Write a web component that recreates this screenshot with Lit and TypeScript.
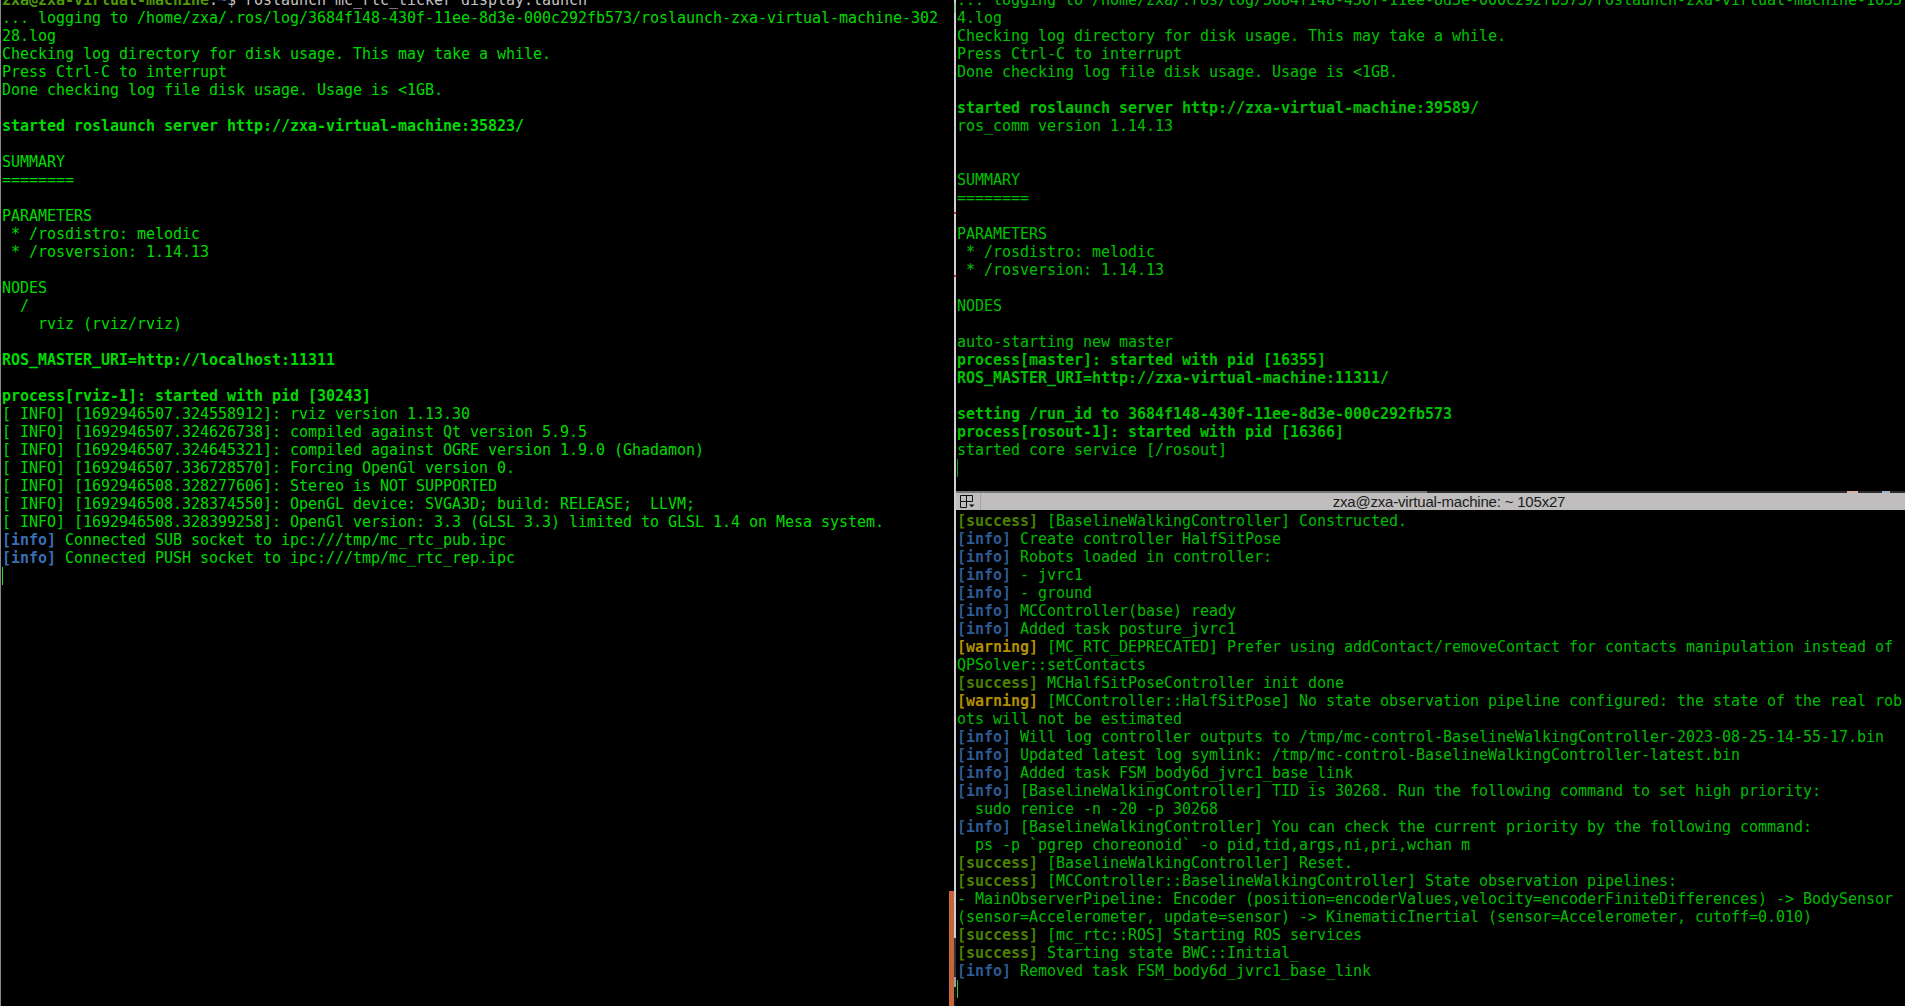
import { LitElement, html, css } from "lit";
import { customElement } from "lit/decorators.js";

type Seg = string | { t: string; c: string };
const I = { t: "[info]", c: "info" };
const S = { t: "[success]", c: "succ" };
const W = { t: "[warning]", c: "warn" };
const B = (t: string) => ({ t, c: "bold" });

const left: Seg[][] = [
  [{ t: "zxa@zxa-virtual-machine", c: "prompt" }, { t: ":", c: "plain" }, { t: "~", c: "info" }, { t: "$ roslaunch mc_rtc_ticker display.launch", c: "plain" }],
  ["... logging to /home/zxa/.ros/log/3684f148-430f-11ee-8d3e-000c292fb573/roslaunch-zxa-virtual-machine-302"],
  ["28.log"],
  ["Checking log directory for disk usage. This may take a while."],
  ["Press Ctrl-C to interrupt"],
  ["Done checking log file disk usage. Usage is <1GB."],
  [],
  [B("started roslaunch server http://zxa-virtual-machine:35823/")],
  [],
  ["SUMMARY"],
  ["========"],
  [],
  ["PARAMETERS"],
  [" * /rosdistro: melodic"],
  [" * /rosversion: 1.14.13"],
  [],
  ["NODES"],
  ["  /"],
  ["    rviz (rviz/rviz)"],
  [],
  [B("ROS_MASTER_URI=http://localhost:11311")],
  [],
  [B("process[rviz-1]: started with pid [30243]")],
  ["[ INFO] [1692946507.324558912]: rviz version 1.13.30"],
  ["[ INFO] [1692946507.324626738]: compiled against Qt version 5.9.5"],
  ["[ INFO] [1692946507.324645321]: compiled against OGRE version 1.9.0 (Ghadamon)"],
  ["[ INFO] [1692946507.336728570]: Forcing OpenGl version 0."],
  ["[ INFO] [1692946508.328277606]: Stereo is NOT SUPPORTED"],
  ["[ INFO] [1692946508.328374550]: OpenGL device: SVGA3D; build: RELEASE;  LLVM;"],
  ["[ INFO] [1692946508.328399258]: OpenGl version: 3.3 (GLSL 3.3) limited to GLSL 1.4 on Mesa system."],
  [I, " Connected SUB socket to ipc:///tmp/mc_rtc_pub.ipc"],
  [I, " Connected PUSH socket to ipc:///tmp/mc_rtc_rep.ipc"],
];

const topRight: Seg[][] = [
  ["... logging to /home/zxa/.ros/log/3684f148-430f-11ee-8d3e-000c292fb573/roslaunch-zxa-virtual-machine-1635"],
  ["4.log"],
  ["Checking log directory for disk usage. This may take a while."],
  ["Press Ctrl-C to interrupt"],
  ["Done checking log file disk usage. Usage is <1GB."],
  [],
  [B("started roslaunch server http://zxa-virtual-machine:39589/")],
  ["ros_comm version 1.14.13"],
  [],
  [],
  ["SUMMARY"],
  ["========"],
  [],
  ["PARAMETERS"],
  [" * /rosdistro: melodic"],
  [" * /rosversion: 1.14.13"],
  [],
  ["NODES"],
  [],
  ["auto-starting new master"],
  [B("process[master]: started with pid [16355]")],
  [B("ROS_MASTER_URI=http://zxa-virtual-machine:11311/")],
  [],
  [B("setting /run_id to 3684f148-430f-11ee-8d3e-000c292fb573")],
  [B("process[rosout-1]: started with pid [16366]")],
  ["started core service [/rosout]"],
];

const bottomRight: Seg[][] = [
  [S, " [BaselineWalkingController] Constructed."],
  [I, " Create controller HalfSitPose"],
  [I, " Robots loaded in controller:"],
  [I, " - jvrc1"],
  [I, " - ground"],
  [I, " MCController(base) ready"],
  [I, " Added task posture_jvrc1"],
  [W, " [MC_RTC_DEPRECATED] Prefer using addContact/removeContact for contacts manipulation instead of"],
  ["QPSolver::setContacts"],
  [S, " MCHalfSitPoseController init done"],
  [W, " [MCController::HalfSitPose] No state observation pipeline configured: the state of the real rob"],
  ["ots will not be estimated"],
  [I, " Will log controller outputs to /tmp/mc-control-BaselineWalkingController-2023-08-25-14-55-17.bin"],
  [I, " Updated latest log symlink: /tmp/mc-control-BaselineWalkingController-latest.bin"],
  [I, " Added task FSM_body6d_jvrc1_base_link"],
  [I, " [BaselineWalkingController] TID is 30268. Run the following command to set high priority:"],
  ["  sudo renice -n -20 -p 30268"],
  [I, " [BaselineWalkingController] You can check the current priority by the following command:"],
  ["  ps -p `pgrep choreonoid` -o pid,tid,args,ni,pri,wchan m"],
  [S, " [BaselineWalkingController] Reset."],
  [S, " [MCController::BaselineWalkingController] State observation pipelines:"],
  ["- MainObserverPipeline: Encoder (position=encoderValues,velocity=encoderFiniteDifferences) -> BodySensor"],
  ["(sensor=Accelerometer, update=sensor) -> KinematicInertial (sensor=Accelerometer, cutoff=0.010)"],
  [S, " [mc_rtc::ROS] Starting ROS services"],
  [S, " Starting state BWC::Initial_"],
  [I, " Removed task FSM_body6d_jvrc1_base_link"],
];

@customElement("app-root")
export class AppRoot extends LitElement {
  static styles = css`
    :host { display: block; width: 1905px; height: 1006px; overflow: hidden; background: #000; }
    .desk { display: grid; grid-template-columns: 954px 951px; height: 1006px; }
    .col { display: flex; flex-direction: column; min-height: 0; }
    .term { background: #000; overflow: hidden; min-height: 0; position: relative; color: var(--fg);
      font: 15px/18px "DejaVu Sans Mono", monospace; letter-spacing: -0.03px; }
    .leftpane { --fg: #00da00; --cur: #20e020; --info: #3a6fb4; height: 1006px; border-left: 1px solid #888; box-sizing: border-box; }
    .toppane { --fg: #00c000; --cur: #00b000; --info: #2f5a94; height: 491px; flex: none; }
    .botpane { --fg: #00bc00; --cur: #3bc03b; --info: #2f5a94; flex: 1; padding-top: 2px; }
    .rcol {
      padding-left: 2px;
      background: linear-gradient(to bottom,
        #d0d0d0 0 3px, #8fcf8f 3px 13px, #d0d0d0 13px 212px, #c03030 212px 214px,
        #d0d0d0 214px 275px, #c03030 275px 277px, #d0d0d0 277px 938px,
        #333 938px 977px, #a0a0a0 977px 987px, #111 987px 1006px);
    }
    .lines { margin-top: -9px; padding-left: 1px; }
    .botpane .lines { margin-top: 0; }
    .ln { height: 18px; white-space: pre; }
    .bold { font-weight: 700; }
    .plain { color: #c4c4c4; }
    .prompt { font-weight: 700; color: #4e9a06; }
    .info { font-weight: 700; color: var(--info); }
    .succ { font-weight: 700; color: #4a8000; }
    .warn { font-weight: 700; color: #b38f00; }
    .cursor { width: 1px; height: 18px; background: var(--cur); }
    .strip {
      height: 2px; flex: none;
      background: linear-gradient(to right,
        #777 0 471px, #2e2e2e 471px 891px, #dcae9e 891px 902px, #2e2e2e 902px 926px,
        #9fb4c4 926px 934px, #2e2e2e 934px 949px);
    }
    .ttl { height: 17px; flex: none; display: flex; align-items: center; background: #bfbdbd; color: #1c1c1c; }
    .ttlicon { flex: none; width: 25px; height: 17px; display: flex; align-items: center; padding-left: 4px;
      box-sizing: border-box; border-right: 1px solid #a6a4a4; }
    .ttl span { flex: 1; text-align: center; white-space: nowrap; padding-left: 12px;
      font: 15px/17px "Liberation Sans", sans-serif; letter-spacing: -0.2px; }
    .orange { position: absolute; right: 0; top: 891px; width: 5px; bottom: 0; background: #c5653a; }
  `;

  private lines(rows: Seg[][]) {
    return rows.map(
      (r) => html`<div class="ln">${r.map((s) => (typeof s === "string" ? s : html`<span class=${s.c}>${s.t}</span>`))}</div>`
    );
  }

  render() {
    return html`<div class="desk">
      <div class="term leftpane">
        <div class="lines">${this.lines(left)}<div class="cursor"></div></div>
        <div class="orange"></div>
      </div>
      <div class="col rcol">
        <div class="term toppane"><div class="lines">${this.lines(topRight)}<div class="cursor"></div></div></div>
        <div class="strip"></div>
        <div class="ttl">
          <div class="ttlicon">
            <svg width="19" height="14" viewBox="0 0 19 14" fill="none" stroke="#111">
              <path d="M.5.5h12v6h-12zM.5 6.5v6h6v-12" />
              <path d="M9 9.5h5.5l-2.75 2.75z" fill="#111" stroke="none" />
            </svg>
          </div>
          <span>zxa@zxa-virtual-machine: ~ 105x27</span>
        </div>
        <div class="term botpane"><div class="lines">${this.lines(bottomRight)}<div class="cursor"></div></div></div>
      </div>
    </div>`;
  }
}
